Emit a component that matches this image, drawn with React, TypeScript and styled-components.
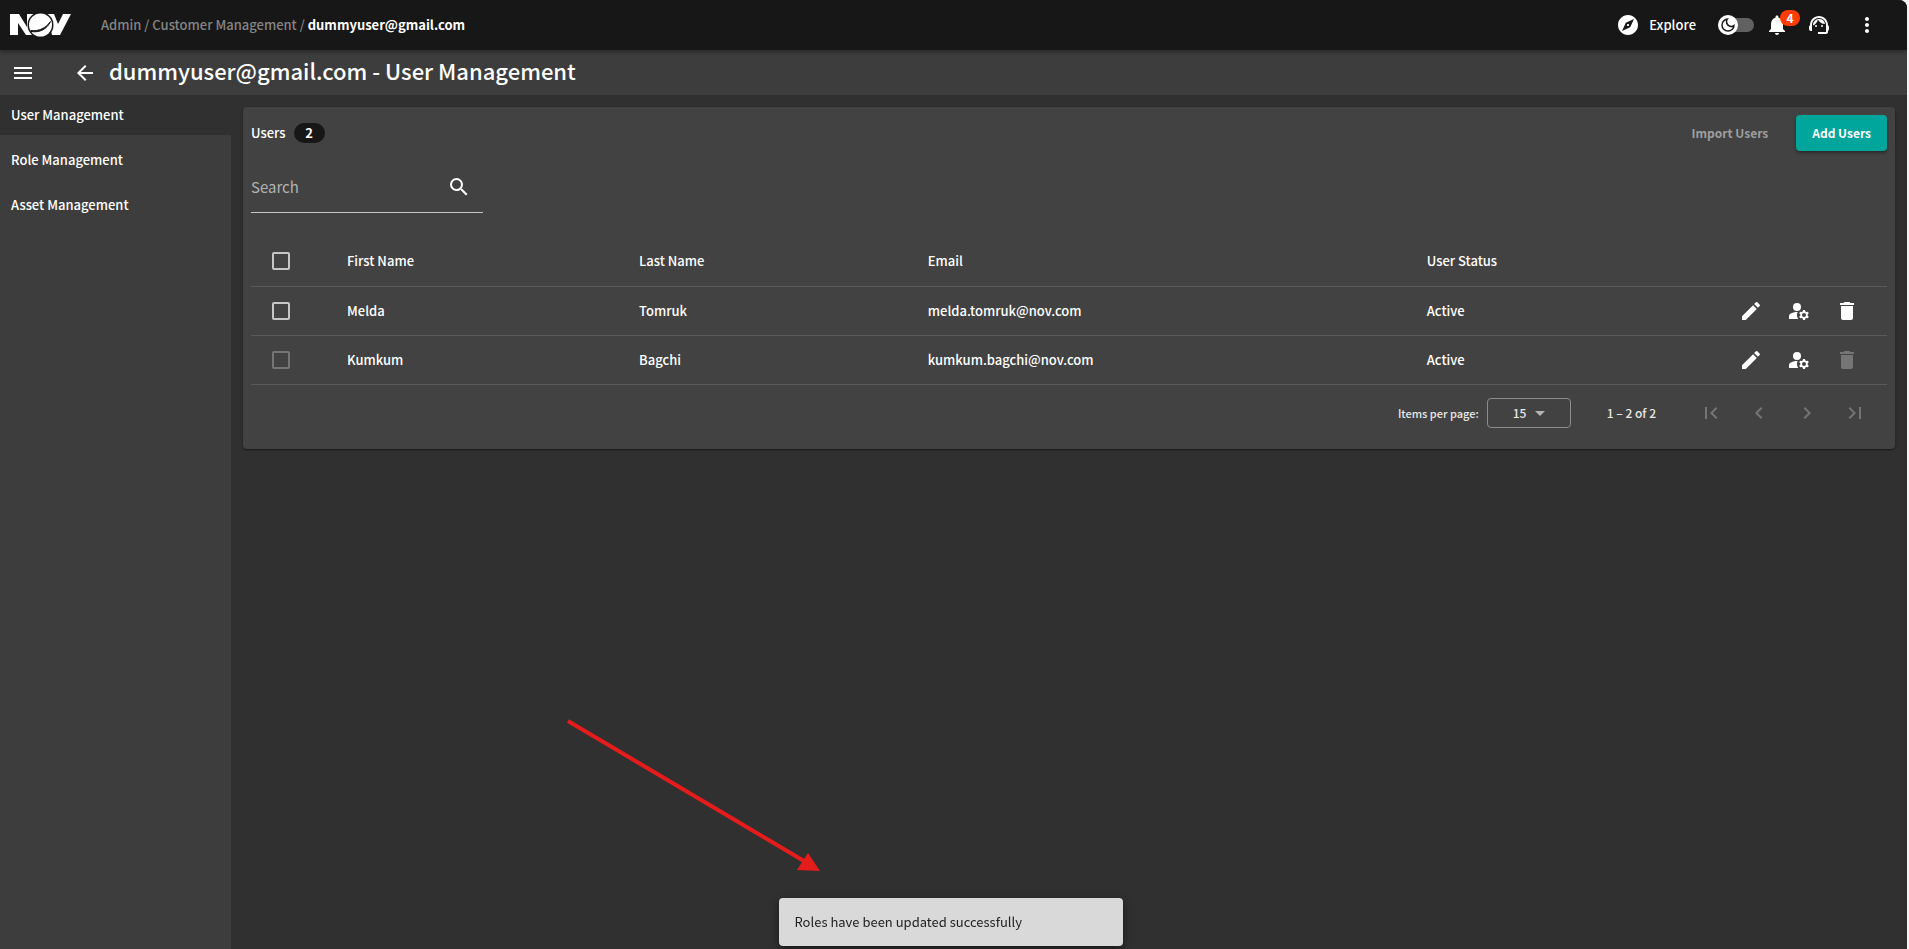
import React from "react";
import styled, { createGlobalStyle } from "styled-components";
import {
  MdArrowBack,
  MdArrowDropDown,
  MdChevronLeft,
  MdChevronRight,
  MdDelete,
  MdEdit,
  MdExplore,
  MdFirstPage,
  MdLastPage,
  MdManageAccounts,
  MdMenu,
  MdMoreVert,
  MdNotifications,
  MdOutlineDarkMode,
  MdSearch,
  MdSupportAgent,
} from "react-icons/md";

const fontStack = `"Noto Sans CJK SC", "Noto Sans", sans-serif`;

const GlobalStyle = createGlobalStyle`
  * { box-sizing: border-box; }
  body {
    margin: 0;
    background: #f3f3f3;
    font-family: ${fontStack};
    font-size: 13px;
    line-height: 20px;
    font-weight: 500;
    color: #fff;
  }
  button, input, select { font: inherit; color: inherit; }
  h1, h2 { margin: 0; font: inherit; }
  a { color: inherit; text-decoration: none; }
`;

const Shell = styled.div`
  display: flex;
  flex-direction: column;
  min-height: 100vh;
  margin-right: 2px;
  background: #303030;
  border-top-right-radius: 8px;
  overflow: hidden;
`;

const TopBar = styled.header`
  display: flex;
  align-items: center;
  height: 50px;
  padding: 0 16px 0 10px;
  background: #171717;
  box-shadow: 0 2px 4px rgba(0, 0, 0, 0.35);
  z-index: 1;
`;

const Logo = styled.svg`
  width: 62px;
  height: 24px;
  margin-right: 29px;
`;

const Breadcrumb = styled.nav`
  flex: 1;
  color: #858585;
`;

const Current = styled.strong`
  font-weight: 700;
  color: #fff;
`;

const IconButton = styled.button<{ $size?: number }>`
  display: inline-flex;
  align-items: center;
  justify-content: center;
  position: relative;
  width: ${(p) => p.$size ?? 48}px;
  height: ${(p) => p.$size ?? 48}px;
  padding: 0;
  border: 0;
  background: none;
  color: #fff;
  font-size: 24px;
  cursor: pointer;
  &:disabled {
    color: #757575;
    cursor: default;
  }
`;

const MoreButton = styled(IconButton)`
  margin-left: 3px;
`;

const ExploreLink = styled.a`
  display: flex;
  align-items: center;
  gap: 9px;
  margin-right: 22px;
  svg { font-size: 24px; }
`;

const ThemeSwitch = styled.label`
  display: flex;
  align-items: center;
  position: relative;
  width: 36px;
  height: 20px;
  margin-right: 2px;
  svg {
    position: absolute;
    left: 0;
    width: 20px;
    height: 20px;
    padding: 1px;
    border-radius: 50%;
    background: #fff;
    color: #171717;
  }
`;

const SwitchTrack = styled.input`
  appearance: none;
  width: 100%;
  height: 14px;
  margin: 0;
  border-radius: 7px;
  background: #616161;
`;

const AlertCount = styled.span`
  position: absolute;
  top: 6px;
  right: -2px;
  width: 20px;
  border-radius: 8px;
  background: #ff3d00;
  font-size: 12px;
  line-height: 16px;
  font-weight: 700;
  text-align: center;
`;

const TitleBar = styled.div`
  display: flex;
  align-items: center;
  height: 45px;
  padding-left: 3px;
  background: #3d3d3d;
`;

const BackButton = styled(IconButton)`
  margin-left: 22px;
`;

const PageTitle = styled.h1`
  padding: 0 0 5px 4px;
  font-size: 22px;
  line-height: 32px;
  font-weight: 500;
`;

const Body = styled.div`
  display: flex;
  flex: 1;
`;

const SideNav = styled.nav`
  display: flex;
  flex-direction: column;
  gap: 5px;
  width: 231px;
  background: #3d3d3d;
`;

const SideLink = styled.a<{ $active?: boolean }>`
  padding: 10px 11px;
  background: ${(p) => (p.$active ? "#303030" : "transparent")};
`;

const Main = styled.main`
  flex: 1;
  padding: 12px;
`;

const Card = styled.section`
  padding: 8px;
  border-radius: 4px;
  background: #424242;
  box-shadow: 0 1px 2px rgba(0, 0, 0, 0.5);
`;

const CardHeader = styled.div`
  display: flex;
  align-items: center;
  height: 36px;
`;

const Count = styled.span`
  width: 31px;
  margin: 0 auto 0 8px;
  border-radius: 10px;
  background: #171717;
  text-align: center;
  font-weight: 700;
`;

const TextButton = styled.button`
  height: 36px;
  padding: 0 12px;
  margin-right: 16px;
  border: 0;
  background: none;
  color: #9e9e9e;
  font-size: 12px;
  font-weight: 700;
`;

const PrimaryButton = styled.button`
  height: 36px;
  padding: 0 16px;
  border: 0;
  border-radius: 4px;
  background: #00a69c;
  font-size: 12px;
  font-weight: 700;
  box-shadow: 0 2px 3px rgba(0, 0, 0, 0.35);
`;

const SearchField = styled.div`
  display: flex;
  align-items: center;
  width: 232px;
  height: 52px;
  margin-top: 10px;
  border-bottom: 1px solid #c6c6c6;
`;

const SearchInput = styled.input`
  flex: 1;
  min-width: 0;
  padding: 0;
  border: 0;
  outline: 0;
  background: none;
  font-size: 15px;
  font-weight: 400;
  &::placeholder {
    color: #b3b3b3;
    opacity: 1;
  }
`;

const Table = styled.table`
  width: 100%;
  margin-top: 23px;
  table-layout: fixed;
  border-collapse: separate;
  border-spacing: 0;
`;

const Col = styled.col<{ $width?: string }>`
  width: ${(p) => p.$width ?? "auto"};
`;

const Row = styled.tr<{ $head?: boolean }>`
  height: ${(p) => (p.$head ? 51 : 49)}px;
`;

const cell = `
  padding: 0;
  border-bottom: 1px solid #5a5a5a;
  text-align: left;
  font-weight: 500;
`;
const HeadCell = styled.th`${cell}`;
const Cell = styled.td`${cell}`;

const Checkbox = styled.input`
  appearance: none;
  display: block;
  width: 18px;
  height: 18px;
  margin: 0 0 0 21px;
  border: 2px solid #c6c6c6;
  border-radius: 2px;
  &:disabled { border-color: #757575; }
`;

const Actions = styled.div`
  display: flex;
  height: 48px;
`;

const Paginator = styled.div`
  display: flex;
  align-items: center;
  justify-content: flex-end;
  height: 56px;
  padding-right: 8px;
  font-size: 12px;
  color: #e8e8e8;
`;

const PageSizeLabel = styled.label`
  font-size: 11px;
`;

const SelectBox = styled.span`
  display: flex;
  align-items: center;
  position: relative;
  margin: 0 36px 0 8px;
  svg {
    position: absolute;
    right: 19px;
    font-size: 24px;
    color: #b3b3b3;
    pointer-events: none;
  }
`;

const PageSize = styled.select`
  appearance: none;
  width: 84px;
  height: 30px;
  padding: 0 0 0 25px;
  border: 1px solid #8c8c8c;
  border-radius: 4px;
  background: none;
`;

const Pages = styled.div`
  display: flex;
  margin-left: 31px;
`;

const Toast = styled.div`
  position: fixed;
  bottom: 3px;
  left: calc(50% - 176px);
  width: 344px;
  padding: 14px 16px;
  border-radius: 4px;
  background: #d9d9d9;
  color: #212121;
  font-weight: 400;
  box-shadow: 0 3px 8px rgba(0, 0, 0, 0.5);
`;

const Pointer = styled.svg`
  position: fixed;
  left: calc(50% - 391px);
  bottom: 74px;
  width: 260px;
  height: 160px;
  pointer-events: none;
`;

const sections = ["User Management", "Role Management", "Asset Management"];

const users = [
  { first: "Melda", last: "Tomruk", email: "melda.tomruk@nov.com", status: "Active", locked: false },
  { first: "Kumkum", last: "Bagchi", email: "kumkum.bagchi@nov.com", status: "Active", locked: true },
];

const NovLogo = () => (
  <Logo viewBox="0 0 62 24" role="img" aria-label="NOV">
    <g fill="#fff">
      <path d="M0 1H9L17 14V1H25V22H16L8 10V22H0Z" />
      <path d="M37 1H44L48 11L53 1H61L50 22H42Z" />
      <circle cx="30.500" cy="12" r="13" fill="#171717" />
      <circle cx="30.500" cy="12" r="11.500" />
    </g>
    <path d="M21 17.500C29 18.500 36 15 40.500 8.500C37 16 30 20 21 18.500Z" fill="#171717" stroke="#171717" />
  </Logo>
);

export default function App() {
  return (
    <>
      <GlobalStyle />
      <Shell>
        <TopBar>
          <NovLogo />
          <Breadcrumb aria-label="Breadcrumb">
            <a href="#admin">Admin</a> / <a href="#customers">Customer Management</a> /{" "}
            <Current>dummyuser@gmail.com</Current>
          </Breadcrumb>
          <ExploreLink href="#explore">
            <MdExplore />
            Explore
          </ExploreLink>
          <ThemeSwitch>
            <SwitchTrack type="checkbox" role="switch" aria-label="Light theme" />
            <MdOutlineDarkMode />
          </ThemeSwitch>
          <IconButton $size={42} aria-label="Notifications">
            <MdNotifications />
            <AlertCount>4</AlertCount>
          </IconButton>
          <IconButton $size={42} aria-label="Support">
            <MdSupportAgent />
          </IconButton>
          <MoreButton aria-label="More">
            <MdMoreVert />
          </MoreButton>
        </TopBar>
        <TitleBar>
          <IconButton $size={40} aria-label="Menu">
            <MdMenu />
          </IconButton>
          <BackButton $size={40} aria-label="Back">
            <MdArrowBack />
          </BackButton>
          <PageTitle>dummyuser@gmail.com - User Management</PageTitle>
        </TitleBar>
        <Body>
          <SideNav aria-label="Sections">
            {sections.map((name, i) => (
              <SideLink key={name} href={`#section-${i}`} $active={i === 0}>
                {name}
              </SideLink>
            ))}
          </SideNav>
          <Main>
            <Card>
              <CardHeader>
                <h2>Users</h2>
                <Count>2</Count>
                <TextButton disabled>Import Users</TextButton>
                <PrimaryButton>Add Users</PrimaryButton>
              </CardHeader>
              <SearchField>
                <SearchInput placeholder="Search" aria-label="Search" />
                <IconButton aria-label="Search users">
                  <MdSearch />
                </IconButton>
              </SearchField>
              <Table>
                <colgroup>
                  <Col $width="96px" />
                  <Col $width="17.85%" />
                  <Col $width="17.65%" />
                  <Col $width="30.5%" />
                  <Col />
                  <Col $width="160px" />
                </colgroup>
                <thead>
                  <Row $head>
                    <HeadCell>
                      <Checkbox type="checkbox" aria-label="Select all users" />
                    </HeadCell>
                    <HeadCell>First Name</HeadCell>
                    <HeadCell>Last Name</HeadCell>
                    <HeadCell>Email</HeadCell>
                    <HeadCell>User Status</HeadCell>
                    <HeadCell />
                  </Row>
                </thead>
                <tbody>
                  {users.map((u) => (
                    <Row key={u.email}>
                      <Cell>
                        <Checkbox type="checkbox" disabled={u.locked} aria-label={`Select ${u.first}`} />
                      </Cell>
                      <Cell>{u.first}</Cell>
                      <Cell>{u.last}</Cell>
                      <Cell>{u.email}</Cell>
                      <Cell>{u.status}</Cell>
                      <Cell>
                        <Actions>
                          <IconButton aria-label={`Edit ${u.first}`}>
                            <MdEdit />
                          </IconButton>
                          <IconButton aria-label={`Manage roles of ${u.first}`}>
                            <MdManageAccounts />
                          </IconButton>
                          <IconButton aria-label={`Delete ${u.first}`} disabled={u.locked}>
                            <MdDelete />
                          </IconButton>
                        </Actions>
                      </Cell>
                    </Row>
                  ))}
                </tbody>
              </Table>
              <Paginator>
                <PageSizeLabel htmlFor="page-size">Items per page:</PageSizeLabel>
                <SelectBox>
                  <PageSize id="page-size" defaultValue="15">
                    <option>15</option>
                    <option>30</option>
                  </PageSize>
                  <MdArrowDropDown />
                </SelectBox>
                <span>1 – 2 of 2</span>
                <Pages>
                  <IconButton disabled aria-label="First page"><MdFirstPage /></IconButton>
                  <IconButton disabled aria-label="Previous page"><MdChevronLeft /></IconButton>
                  <IconButton disabled aria-label="Next page"><MdChevronRight /></IconButton>
                  <IconButton disabled aria-label="Last page"><MdLastPage /></IconButton>
                </Pages>
              </Paginator>
            </Card>
          </Main>
        </Body>
      </Shell>
      <Pointer viewBox="0 0 260 160" aria-hidden="true">
        <path d="M4 6L240 146" stroke="#e51c1c" strokeWidth="4" />
        <path d="M256 156L244 138L233 155Z" fill="#e51c1c" />
      </Pointer>
      <Toast role="status">Roles have been updated successfully</Toast>
    </>
  );
}
